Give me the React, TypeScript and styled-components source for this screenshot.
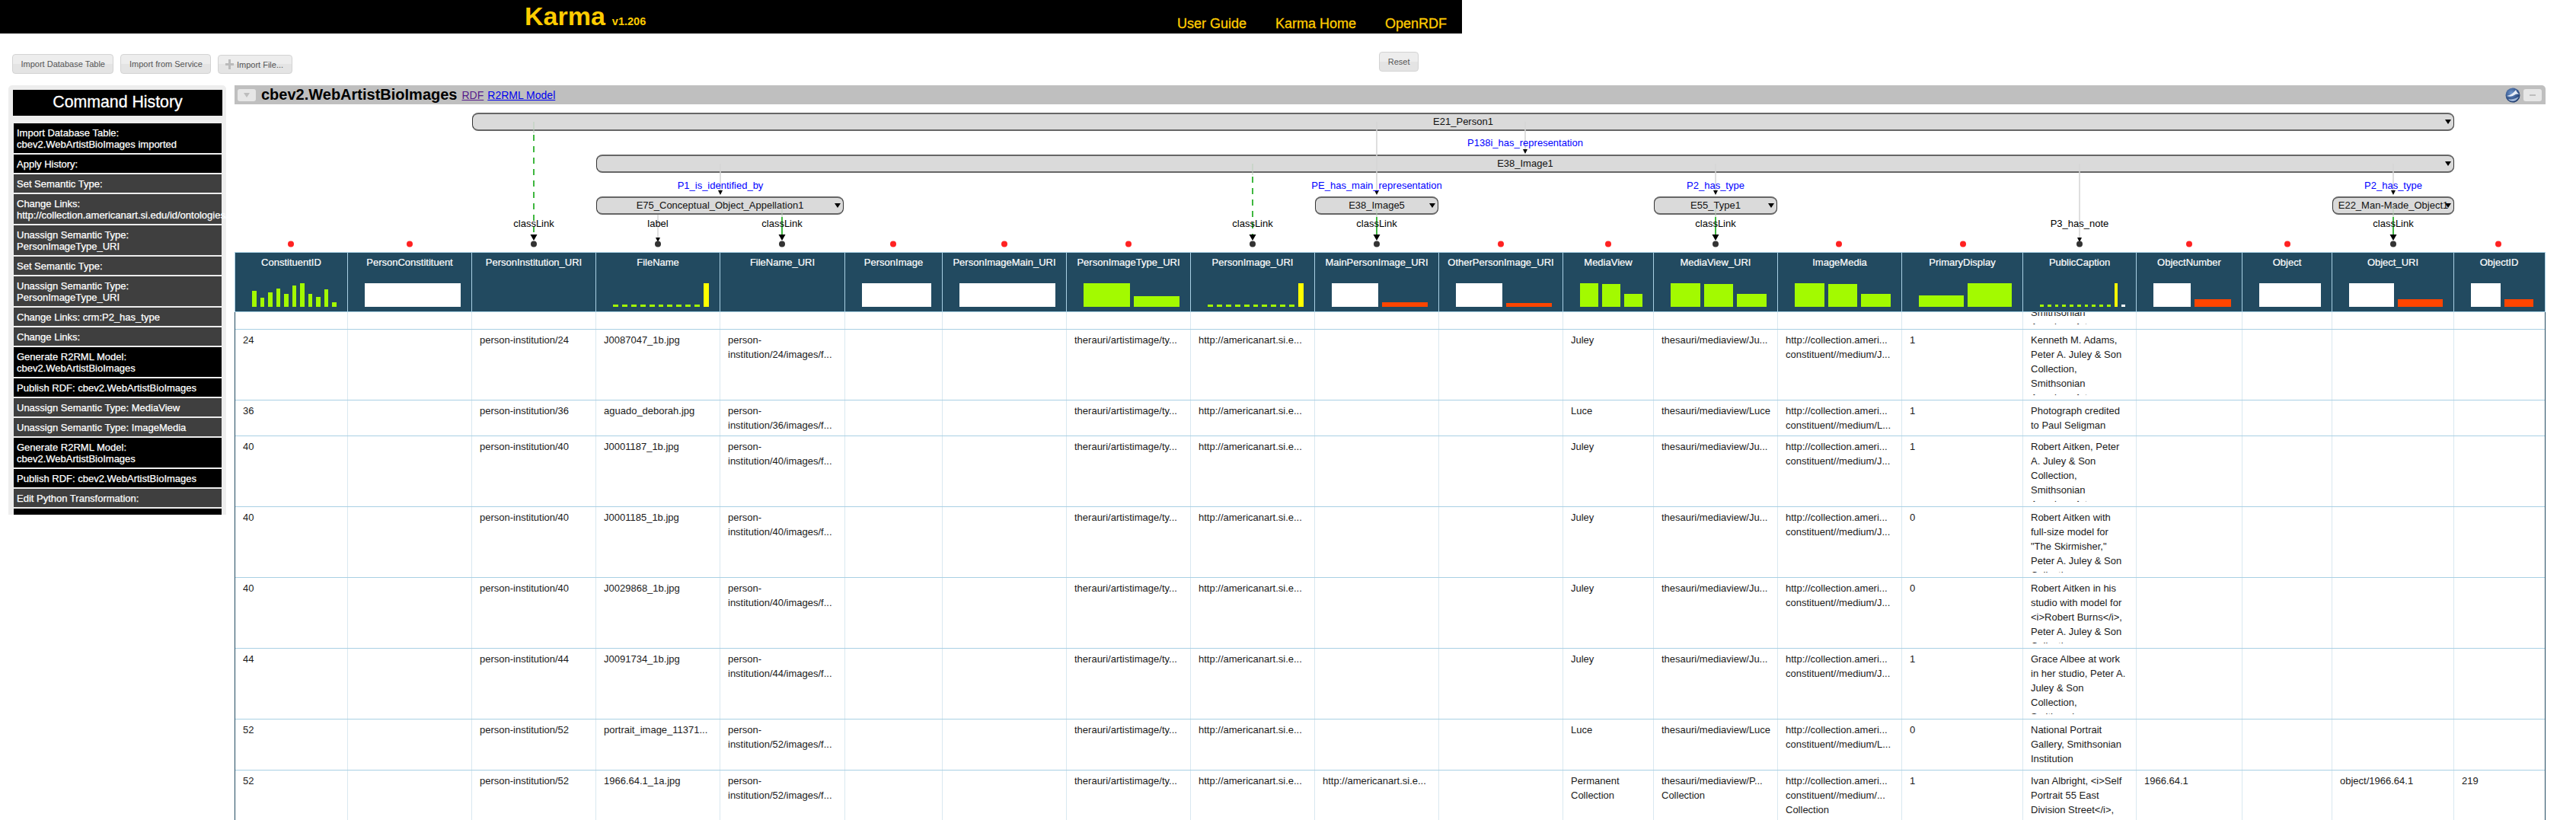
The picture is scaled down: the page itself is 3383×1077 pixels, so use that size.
import styled, { createGlobalStyle } from 'styled-components'

const GlobalStyle = createGlobalStyle`
  body {
    margin: 0;
    background: #fff;
    font-family: "Liberation Sans", Arial, sans-serif;
    overflow: hidden;
  }
`

const GREEN = '#a3fa00'
const YELLOW = '#ffff00'
const ORANGE = '#ff4500'
const WHITE = '#ffffff'
const NAVY = '#224a60'

type BarData = [number, string]

const ticks = (n: number): BarData[] => Array.from({ length: n }, () => [3, GREEN] as BarData)
const white = (): BarData[] => [[31, WHITE]]
const threeGreen: BarData[] = [
  [31, GREEN],
  [30, GREEN],
  [17, GREEN],
]

const columns: { name: string; width: number; bars: BarData[] }[] = [
  {
    name: 'ConstituentID',
    width: 148,
    bars: [21, 12, 19, 24, 17, 28, 31, 17, 13, 23, 6].map((h) => [h, GREEN] as BarData),
  },
  { name: 'PersonConstitituent', width: 163, bars: white() },
  { name: 'PersonInstitution_URI', width: 163, bars: [] },
  { name: 'FileName', width: 163, bars: [...ticks(10), [31, YELLOW]] },
  { name: 'FileName_URI', width: 164, bars: [] },
  { name: 'PersonImage', width: 128, bars: white() },
  { name: 'PersonImageMain_URI', width: 163, bars: white() },
  {
    name: 'PersonImageType_URI',
    width: 163,
    bars: [
      [31, GREEN],
      [14, GREEN],
    ],
  },
  { name: 'PersonImage_URI', width: 163, bars: [...ticks(10), [31, YELLOW]] },
  {
    name: 'MainPersonImage_URI',
    width: 163,
    bars: [
      [31, WHITE],
      [6, ORANGE],
    ],
  },
  {
    name: 'OtherPersonImage_URI',
    width: 163,
    bars: [
      [31, WHITE],
      [5, ORANGE],
    ],
  },
  { name: 'MediaView', width: 119, bars: threeGreen },
  { name: 'MediaView_URI', width: 163, bars: threeGreen },
  { name: 'ImageMedia', width: 163, bars: threeGreen },
  {
    name: 'PrimaryDisplay',
    width: 159,
    bars: [
      [15, GREEN],
      [31, GREEN],
    ],
  },
  { name: 'PublicCaption', width: 149, bars: [...ticks(10), [31, YELLOW], [3, WHITE]] },
  {
    name: 'ObjectNumber',
    width: 139,
    bars: [
      [31, WHITE],
      [10, ORANGE],
    ],
  },
  { name: 'Object', width: 118, bars: white() },
  {
    name: 'Object_URI',
    width: 160,
    bars: [
      [31, WHITE],
      [10, ORANGE],
    ],
  },
  {
    name: 'ObjectID',
    width: 118,
    bars: [
      [31, WHITE],
      [10, ORANGE],
    ],
  },
]

const gridColumns = columns.map((c) => `${c.width}px`).join(' ')

const history: { text: string; undone?: boolean }[] = [
  { text: 'Import Database Table:\ncbev2.WebArtistBioImages imported' },
  { text: 'Apply History:' },
  { text: 'Set Semantic Type:', undone: true },
  { text: 'Change Links:\nhttp://collection.americanart.si.edu/id/ontologies/', undone: true },
  { text: 'Unassign Semantic Type:\nPersonImageType_URI', undone: true },
  { text: 'Set Semantic Type:', undone: true },
  { text: 'Unassign Semantic Type:\nPersonImageType_URI', undone: true },
  { text: 'Change Links: crm:P2_has_type', undone: true },
  { text: 'Change Links:', undone: true },
  { text: 'Generate R2RML Model:\ncbev2.WebArtistBioImages' },
  { text: 'Publish RDF: cbev2.WebArtistBioImages' },
  { text: 'Unassign Semantic Type: MediaView', undone: true },
  { text: 'Unassign Semantic Type: ImageMedia', undone: true },
  { text: 'Generate R2RML Model:\ncbev2.WebArtistBioImages' },
  { text: 'Publish RDF: cbev2.WebArtistBioImages' },
  { text: 'Edit Python Transformation:', undone: true },
  { text: 'Generate R2RML Model:\ncbev2.WebArtistBioImages' },
]

const nodes = [
  { label: 'E21_Person1', x: 620, w: 2603, y: 148 },
  { label: 'E38_Image1', x: 783, w: 2440, y: 203 },
  { label: 'E75_Conceptual_Object_Appellation1', x: 783, w: 325, y: 258 },
  { label: 'E38_Image5', x: 1727, w: 162, y: 258 },
  { label: 'E55_Type1', x: 2172, w: 162, y: 258 },
  { label: 'E22_Man-Made_Object1', x: 3063, w: 160, y: 258 },
]

const links = [
  { label: 'P138i_has_representation', x: 2003, y: 188, blue: true },
  { label: 'P1_is_identified_by', x: 946, y: 244, blue: true },
  { label: 'PE_has_main_representation', x: 1808, y: 244, blue: true },
  { label: 'P2_has_type', x: 2253, y: 244, blue: true },
  { label: 'P2_has_type', x: 3143, y: 244, blue: true },
  { label: 'classLink', x: 701, y: 294 },
  { label: 'label', x: 864, y: 294 },
  { label: 'classLink', x: 1027, y: 294 },
  { label: 'classLink', x: 1645, y: 294 },
  { label: 'classLink', x: 1808, y: 294 },
  { label: 'classLink', x: 2253, y: 294 },
  { label: 'P3_has_note', x: 2731, y: 294 },
  { label: 'classLink', x: 3143, y: 294 },
]

const redDots = [382, 538, 1173, 1319, 1482, 1971, 2112, 2415, 2578, 2875, 3004, 3281]

type RowData = { height: number; cells: Record<number, string> }

const makeRow = (
  height: number,
  id: string,
  file: string,
  media: string,
  letter: string,
  primary: string,
  caption: string,
  extra: Record<number, string> = {},
): RowData => ({
  height,
  cells: {
    0: id,
    2: `person-institution/${id}`,
    3: file,
    4: `person-\ninstitution/${id}/images/f...`,
    7: 'therauri/artistimage/ty...',
    8: 'http://americanart.si.e...',
    11: media,
    12: media === 'Luce' ? 'thesauri/mediaview/Luce' : 'thesauri/mediaview/Ju...',
    13: `http://collection.ameri...\nconstituent//medium/${letter}...`,
    14: primary,
    15: caption,
    ...extra,
  },
})

const rows: RowData[] = [
  { height: 93, cells: { 15: 'Kenneth M. Adams,\nPeter A. Juley & Son\nCollection,\nSmithsonian\nAmerican Art' } },
  makeRow(93, '24', 'J0087047_1b.jpg', 'Juley', 'J', '1', 'Kenneth M. Adams,\nPeter A. Juley & Son\nCollection,\nSmithsonian\nAmerican Art'),
  makeRow(47, '36', 'aguado_deborah.jpg', 'Luce', 'L', '1', 'Photograph credited\nto Paul Seligman'),
  makeRow(93, '40', 'J0001187_1b.jpg', 'Juley', 'J', '1', 'Robert Aitken, Peter\nA. Juley & Son\nCollection,\nSmithsonian\nAmerican Art'),
  makeRow(93, '40', 'J0001185_1b.jpg', 'Juley', 'J', '0', 'Robert Aitken with\nfull-size model for\n"The Skirmisher,"\nPeter A. Juley & Son\nCollection,'),
  makeRow(93, '40', 'J0029868_1b.jpg', 'Juley', 'J', '0', 'Robert Aitken in his\nstudio with model for\n<i>Robert Burns</i>,\nPeter A. Juley & Son\nCollection,'),
  makeRow(93, '44', 'J0091734_1b.jpg', 'Juley', 'J', '1', 'Grace Albee at work\nin her studio, Peter A.\nJuley & Son\nCollection,\nSmithsonian'),
  makeRow(67, '52', 'portrait_image_11371...', 'Luce', 'L', '0', 'National Portrait\nGallery, Smithsonian\nInstitution'),
  makeRow(93, '52', '1966.64.1_1a.jpg', 'Permanent\nCollection', '', '1', 'Ivan Albright, <i>Self\nPortrait 55 East\nDivision Street</i>,\nn.d.', {
    9: 'http://americanart.si.e...',
    12: 'thesauri/mediaview/P...\nCollection',
    13: 'http://collection.ameri...\nconstituent//medium/...\nCollection',
    16: '1966.64.1',
    18: 'object/1966.64.1',
    19: '219',
  }),
]

const TopBar = styled.div`
  box-sizing: border-box;
  display: flex;
  width: 1920px;
  height: 44px;
  padding: 0 20px 0 689px;
  background: #000;
  color: #ffcc00;
`

const Brand = styled.div`
  display: flex;
  align-items: baseline;
  gap: 9px;
  height: 44px;
  font-weight: bold;
  font-size: 34px;
  line-height: 42px;
`

const Version = styled.span`
  font-size: 14.5px;
`

const TopLinks = styled.nav`
  display: flex;
  gap: 38px;
  margin-left: auto;
  padding-top: 21px;
  font-size: 18px;
  line-height: 20px;
  -webkit-text-stroke: 0.3px #ffcc00;
`

const Toolbar = styled.div`
  box-sizing: border-box;
  display: flex;
  align-items: flex-start;
  justify-content: space-between;
  width: 1863px;
  height: 68px;
  padding: 24px 0 0 16px;
`

const ToolGroup = styled.div`
  display: flex;
  gap: 9px;
  margin-top: 3px;
`

const ToolButton = styled.button<{ $drop?: number }>`
  box-sizing: border-box;
  display: flex;
  align-items: center;
  gap: 4px;
  height: ${(p) => 26 - (p.$drop || 0)}px;
  margin-top: ${(p) => p.$drop || 0}px;
  padding: 0 10.5px;
  border: 1px solid #d3d3d3;
  border-radius: 4px;
  background: linear-gradient(#ededed 50%, #e4e4e4 50%);
  color: #555;
  font-family: inherit;
  font-size: 11px;
`

const PlusIcon = styled.svg`
  width: 11px;
  height: 13px;
  margin-left: -2px;
`

const Main = styled.div`
  display: flex;
  align-items: flex-start;
  gap: 11px;
  padding-left: 11px;
`

const Sidebar = styled.aside`
  box-sizing: border-box;
  display: flex;
  flex-direction: column;
  flex: none;
  width: 286px;
  height: 564px;
  padding: 6px 5px 0 6px;
  overflow: hidden;
  border-radius: 5px 5px 0 0;
  background: #eeeeee;
`

const SidebarTitle = styled.div`
  flex: none;
  height: 34px;
  margin-bottom: 10px;
  background: #000;
  color: #fff;
  font-size: 21.3px;
  line-height: 33px;
  text-align: center;
  -webkit-text-stroke: 0.3px #fff;
`

const HistoryList = styled.div`
  display: flex;
  flex-direction: column;
  gap: 2px;
  margin: 0 1px;
`

const HistoryItem = styled.div<{ $undone?: boolean }>`
  flex: none;
  padding: 4.5px 4px;
  background: ${(p) => (p.$undone ? '#3f3f3f' : '#000')};
  color: #fff;
  font-size: 13px;
  line-height: 15px;
  white-space: pre;
  -webkit-text-stroke: 0.25px #fff;
`

const Worksheet = styled.section`
  flex: none;
  width: 3035px;
`

const TitleBar = styled.div`
  display: flex;
  align-items: center;
  height: 25px;
  padding: 0 5px 0 4px;
  border-radius: 0 5px 0 0;
  background: #bfbfbf;
`

const CollapseButton = styled.span`
  display: flex;
  flex: none;
  align-items: center;
  justify-content: center;
  width: 24px;
  height: 16px;
  border-radius: 3px;
  background: #e6e6e6;
`

const CollapseGlyph = styled.svg`
  width: 8px;
  height: 6px;
`

const SheetName = styled.h1`
  margin: 0 6px 0 7px;
  color: #000;
  font-size: 20px;
  font-weight: bold;
  line-height: 25px;
`

const SheetLink = styled.a<{ $visited?: boolean }>`
  margin-right: 5px;
  color: ${(p) => (p.$visited ? '#551a8b' : '#0000ee')};
  font-size: 14px;
  text-decoration: underline;
`

const GlobeIcon = styled.svg`
  width: 20px;
  height: 20px;
  margin: 0 4px 0 auto;
`

const Graph = styled.div`
  position: relative;
  height: 194px;
`

const Wires = styled.svg`
  position: absolute;
  top: 0;
  left: 0;
  width: 3035px;
  height: 194px;
  z-index: 2;
  pointer-events: none;
`

const GraphNode = styled.div<{ $x: number; $y: number; $w: number }>`
  position: absolute;
  top: ${(p) => p.$y - 137}px;
  left: ${(p) => p.$x - 308}px;
  box-sizing: border-box;
  width: ${(p) => p.$w}px;
  height: 24px;
  border: 1px solid #333;
  border-top: 2px solid #666;
  border-bottom: 2px solid #666;
  border-radius: 8px;
  background: #dadada;
  color: #111;
  font-size: 13px;
  line-height: 20px;
  text-align: center;
  white-space: nowrap;
`

const NodeCaret = styled.span`
  position: absolute;
  top: 7px;
  right: 3px;
  width: 0;
  height: 0;
  border-top: 6px solid #000;
  border-right: 4.5px solid transparent;
  border-left: 4.5px solid transparent;
`

const LinkLabel = styled.span<{ $x: number; $y: number; $blue?: boolean }>`
  position: absolute;
  top: ${(p) => p.$y - 137 - 8}px;
  left: ${(p) => p.$x - 308}px;
  z-index: 3;
  transform: translateX(-50%);
  color: ${(p) => (p.$blue ? '#0000ff' : '#000')};
  font-size: 13px;
  line-height: 16px;
  white-space: nowrap;
`

const HeaderRow = styled.div`
  display: grid;
  grid-template-columns: ${gridColumns};
  height: 79px;
  box-sizing: border-box;
  border: 1px solid #a9d0e4;
  background: ${NAVY};
`

const HeaderCell = styled.div`
  box-sizing: border-box;
  display: flex;
  flex-direction: column;
  justify-content: space-between;
  min-width: 0;
  padding: 5px 0 6px;
  border-right: 1px solid #a9d0e4;
  color: #fff;
  font-size: 13px;
  line-height: 16px;
  text-align: center;
  white-space: nowrap;
  -webkit-text-stroke: 0.2px #fff;
  &:last-child {
    border-right: 0;
  }
`

const Chart = styled.div`
  display: flex;
  align-items: flex-end;
  gap: 5px;
  height: 31px;
  padding: 0 14px 0 22px;
`

const Bar = styled.div`
  flex: 1;
`

const ScrollArea = styled.div`
  box-sizing: border-box;
  height: 667px;
  overflow: hidden;
  border-right: 1px solid ${NAVY};
  border-left: 1px solid ${NAVY};
`

const ScrollContent = styled.div`
  margin-top: -70px;
`

const DataRow = styled.div<{ $height: number }>`
  box-sizing: border-box;
  display: grid;
  grid-template-columns: ${gridColumns};
  height: ${(p) => p.$height}px;
  border-bottom: 1px solid #a9d0e4;
`

const DataCell = styled.div`
  min-width: 0;
  border-right: 1px solid #d9e8f0;
  &:last-child {
    border-right: 0;
  }
`

const CellText = styled.div<{ $height: number }>`
  height: ${(p) => p.$height - 11}px;
  margin: 4px 0 0 10px;
  overflow: hidden;
  color: #1a1a1a;
  font-size: 13px;
  line-height: 19px;
  white-space: pre;
`

export default function App() {
  return (
    <>
      <GlobalStyle />
      <TopBar>
        <Brand>
          Karma <Version>v1.206</Version>
        </Brand>
        <TopLinks>
          <span>User Guide</span>
          <span>Karma Home</span>
          <span>OpenRDF</span>
        </TopLinks>
      </TopBar>
      <Toolbar>
        <ToolGroup>
          <ToolButton>Import Database Table</ToolButton>
          <ToolButton>Import from Service</ToolButton>
          <ToolButton $drop={1}>
            <PlusIcon viewBox="0 0 11 13">
              <path d="M4 0h3v5h4v3H7v5H4V8H0V5h4z" fill="#bbb" />
            </PlusIcon>
            Import File...
          </ToolButton>
        </ToolGroup>
        <ToolButton>Reset</ToolButton>
      </Toolbar>
      <Main>
        <Sidebar>
          <SidebarTitle>Command History</SidebarTitle>
          <HistoryList>
            {history.map((h, i) => (
              <HistoryItem key={i} $undone={h.undone}>
                {h.text}
              </HistoryItem>
            ))}
          </HistoryList>
        </Sidebar>
        <Worksheet>
          <TitleBar>
            <CollapseButton>
              <CollapseGlyph viewBox="0 0 8 6">
                <path d="M0 0h8L4 6z" fill="#bdbdbd" />
              </CollapseGlyph>
            </CollapseButton>
            <SheetName>cbev2.WebArtistBioImages</SheetName>
            <SheetLink $visited>RDF</SheetLink>
            <SheetLink>R2RML Model</SheetLink>
            <GlobeIcon viewBox="0 0 20 20">
              <defs>
                <radialGradient id="globe" cx="0.4" cy="0.35" r="0.75">
                  <stop offset="0" stopColor="#6f97d0" />
                  <stop offset="1" stopColor="#0e2a5c" />
                </radialGradient>
              </defs>
              <circle cx="10" cy="10" r="9.5" fill="url(#globe)" />
              <path d="M2 11c5-1 9-4 12-8 1 3 3 5 5 6-4-1-6 0-9 2-3 1-5 1-8 0z" fill="#e6ecf5" />
              <path d="M4 15c4 1 9 0 14-3-2 4-5 6-8 6-3 0-5-1-6-3z" fill="#9fb6d8" />
            </GlobeIcon>
            <CollapseButton>
              <CollapseGlyph viewBox="0 0 8 6">
                <path d="M0 2h8v2H0z" fill="#bdbdbd" />
              </CollapseGlyph>
            </CollapseButton>
          </TitleBar>
          <Graph>
            {nodes.map((n) => (
              <GraphNode key={n.label} $x={n.x} $y={n.y} $w={n.w}>
                {n.label}
                <NodeCaret />
              </GraphNode>
            ))}
            <Wires viewBox="308 137 3035 194">
              {/* object property edges */}
              {[
                [2003, 160, 197],
                [946, 215, 251],
                [1808, 160, 251],
                [2253, 215, 251],
                [3143, 215, 251],
                [864, 282, 312],
                [2731, 215, 312],
              ].map(([x, from, to]) => (
                <line key={`${x}-${from}`} x1={x} x2={x} y1={from} y2={to} stroke="#d4d4d4" strokeWidth="1.5" />
              ))}
              {[
                [2003, 196],
                [946, 250],
                [1808, 250],
                [2253, 250],
                [3143, 250],
                [864, 312],
                [2731, 312],
              ].map(([x, y]) => (
                <path key={`${x}-${y}`} d={`M${x - 3} ${y}h6l-3 6z`} fill="#000" />
              ))}
              {/* class links */}
              {[1027, 1808, 2253, 3143].map((x) => (
                <g key={x}>
                  <line x1={x} x2={x} y1={270} y2={285} stroke="#b9d0b9" strokeWidth="1" />
                  <line x1={x} x2={x} y1={285} y2={308} stroke="#00a000" strokeWidth="1.5" />
                </g>
              ))}
              {[
                [701, 160],
                [1645, 215],
              ].map(([x, top]) => (
                <g key={x}>
                  <line x1={x} x2={x} y1={top} y2={top + 15} stroke="#b9d0b9" strokeWidth="1" />
                  <line x1={x} x2={x} y1={top + 17} y2={308} stroke="#00a000" strokeWidth="1.5" strokeDasharray="8 7" />
                </g>
              ))}
              {[701, 1027, 1645, 1808, 2253, 3143].map((x) => (
                <path key={x} d={`M${x - 4.5} 308h9l-4.5 8z`} fill="#000" />
              ))}
              {[701, 864, 1027, 1645, 1808, 2253, 2731, 3143].map((x) => (
                <circle key={x} cx={x} cy={320.5} r={4} fill="#333" />
              ))}
              {redDots.map((x) => (
                <circle key={x} cx={x} cy={320.5} r={4} fill="#ff2222" />
              ))}
            </Wires>
            {links.map((l) => (
              <LinkLabel key={`${l.label}-${l.x}`} $x={l.x} $y={l.y} $blue={l.blue}>
                {l.label}
              </LinkLabel>
            ))}
          </Graph>
          <HeaderRow>
            {columns.map((c) => (
              <HeaderCell key={c.name}>
                {c.name}
                <Chart>
                  {c.bars.map(([h, color], i) => (
                    <Bar key={i} style={{ height: h, background: color }} />
                  ))}
                </Chart>
              </HeaderCell>
            ))}
          </HeaderRow>
          <ScrollArea>
            <ScrollContent>
              {rows.map((r, i) => (
                <DataRow key={i} $height={r.height}>
                  {columns.map((c, j) => (
                    <DataCell key={c.name}>
                      {r.cells[j] && <CellText $height={r.height}>{r.cells[j]}</CellText>}
                    </DataCell>
                  ))}
                </DataRow>
              ))}
            </ScrollContent>
          </ScrollArea>
        </Worksheet>
      </Main>
    </>
  )
}
